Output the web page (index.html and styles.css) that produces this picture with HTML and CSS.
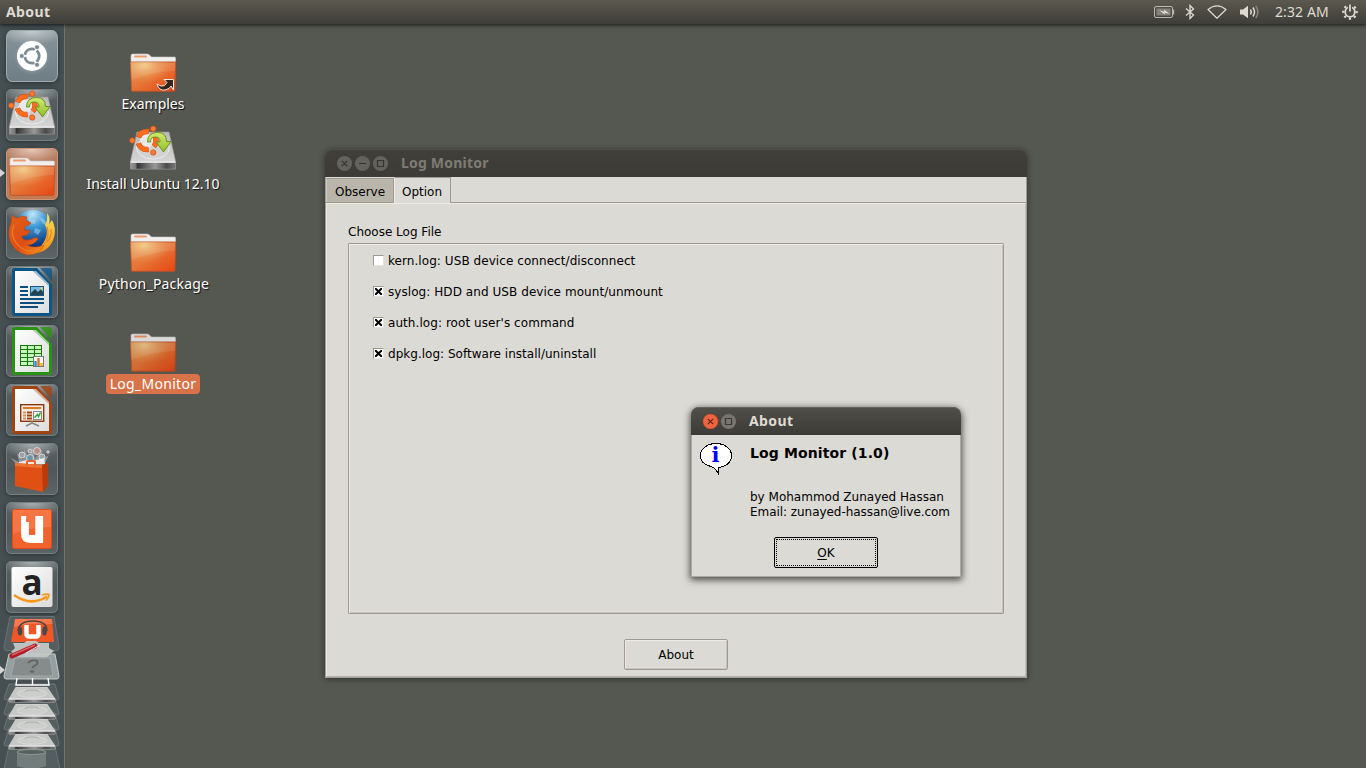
FILE: index.html
```html
<!DOCTYPE html>
<html lang="en">
<head>
<meta charset="utf-8">
<title>About</title>
<link rel="stylesheet" href="styles.css">
</head>
<body>
<svg class="defs" aria-hidden="true">
  <defs>
    <linearGradient id="orange" x1="0" y1="0" x2="1" y2="1"><stop offset="0" stop-color="#e6904e"/><stop offset=".45" stop-color="#e6783a"/><stop offset="1" stop-color="#e8450f"/></linearGradient>
    <radialGradient id="shine" cx=".3" cy=".12" r=".6"><stop offset="0" stop-color="#f3d08a" stop-opacity=".9"/><stop offset="1" stop-color="#ea9a55" stop-opacity="0"/></radialGradient>
    <linearGradient id="plate" x1="0" y1="0" x2="0" y2="1"><stop offset="0" stop-color="#b9b9b9"/><stop offset="1" stop-color="#dcdcdc"/></linearGradient>
    <linearGradient id="front"><stop offset="0" stop-color="#999"/><stop offset=".12" stop-color="#777"/><stop offset=".15" stop-color="#333"/><stop offset=".55" stop-color="#999"/><stop offset=".8" stop-color="#4c4c4c"/><stop offset="1" stop-color="#777"/></linearGradient>
    <linearGradient id="lime" x1="0" y1="0" x2="0" y2="1"><stop offset="0" stop-color="#d3ea72"/><stop offset="1" stop-color="#8fbf2c"/></linearGradient>
    <linearGradient id="paper" x1="0" y1="0" x2="1" y2="1"><stop offset="0" stop-color="#fff"/><stop offset="1" stop-color="#dcdcdc"/></linearGradient>
    <radialGradient id="globe" cx=".5" cy=".1" r=".85"><stop offset="0" stop-color="#bfe6fa"/><stop offset=".4" stop-color="#3d97d3"/><stop offset="1" stop-color="#0b2f78"/></radialGradient>
    <linearGradient id="fox" x1="0" y1="0" x2="1" y2="1"><stop offset="0" stop-color="#e2601a"/><stop offset=".55" stop-color="#dd4d12"/><stop offset="1" stop-color="#f39a1f"/></linearGradient>
    <linearGradient id="tail" x1="0" y1="0" x2="0" y2="1"><stop offset="0" stop-color="#fbe65e"/><stop offset="1" stop-color="#ee8b18"/></linearGradient>
    <symbol id="folder" viewBox="0 0 48 40">
      <path d="M2 12V2.500q0-1.500 1.500-1.500H18q2 0 3 1.500L22.500 4H45.500q1 0 1 1v10H2z" fill="#f0efee" stroke="#c9c6c3" stroke-width=".6"/>
      <rect x="5" y="2.600" width="13" height="2" rx="1" fill="#eb9c6b"/>
      <path d="M1.500 9h45.200l-.8 28.500q0 .8-1 .8H3.400q-1 0-1-.8z" fill="url(#orange)" stroke="#bb512a" stroke-width=".9"/>
      <path d="M1.500 9h45.200l-.8 28.500q0 .8-1 .8H3.400q-1 0-1-.8z" fill="url(#shine)"/>
      <path d="M2.500 9.700h43.400l-.3 8Q24 18.500 2.800 27z" fill="#fff" opacity=".1"/>
    </symbol>
    <symbol id="disk" viewBox="0 0 48 46">
      <path d="M8 7h32l6.500 29v8H1.500v-8z" fill="url(#plate)" stroke="#999" stroke-width=".7"/>
      <ellipse cx="24" cy="23" rx="16.500" ry="11" fill="#d2d2d2" stroke="#ececec"/>
      <path d="M1.500 37.500h45v5.500q0 1-1.500 1H3q-1.500 0-1.500-1z" fill="url(#front)" stroke="#888" stroke-width=".6"/>
      <path d="M1.500 37.200h45" stroke="#fff"/>
      <circle cx="18" cy="15.500" r="7" fill="#e9e9e9"/>
      <circle cx="18" cy="15.500" r="9" fill="none" stroke="#d04a10" stroke-width="5.400" stroke-dasharray="13 5.850" stroke-dashoffset="6.500"/>
      <circle cx="18" cy="15.500" r="9" fill="none" stroke="#fb6c1e" stroke-width="4.600" stroke-dasharray="12.500 6.350" stroke-dashoffset="6.250"/>
      <g fill="#fb7a34" stroke="#cf4b12" stroke-width=".7"><circle cx="3.300" cy="15.500" r="2.700"/><circle cx="24.200" cy="3.700" r="2.700"/><circle cx="24.200" cy="27.500" r="2.700"/></g>
      <path d="M18.500 17q0-9.500 10-9.500 9 0 9 9H42L34.500 27 27 17h4q.5-5-5-5-4.500 0-4.500 5z" fill="url(#lime)" stroke="#628d10" stroke-width=".9"/>
    </symbol>
    <symbol id="sheet" viewBox="0 0 40 48">
      <path d="M3 0h22l15 17v28q0 3-3 3H3q-3 0-3-3V3q0-3 3-3z" fill="currentColor"/>
      <path d="M28 0h9q3 0 3 3v10z" fill="currentColor" opacity=".8"/>
      <path d="M3 3h18L37 18v27H3z" fill="url(#paper)"/>
      <path d="M21 3 37 18V16L24 3z" fill="#fff" opacity=".6"/>
    </symbol>
    <symbol id="thindisk" viewBox="0 0 48 17">
      <path d="M8 0h31l8 12v3H1v-3z" fill="#c6c8c6" stroke="#e2e2e2" stroke-width=".6"/>
      <ellipse cx="24" cy="6.500" rx="15" ry="3.800" fill="#cccecc" stroke="#dedede" stroke-width=".7"/><path d="M17 5q0-2 7-2t7 2" fill="none" stroke="#aaa"/>
      <path d="M1 12.500h46v2.500H1z" fill="url(#front)"/><path d="M1 12h46" stroke="#f2f2f2"/>
    </symbol>
  </defs>
</svg>

<div class="desktop">
  <header class="panel">
    <span class="panel-title">About</span>
    <div class="indicators">
      <svg class="i-battery" viewBox="0 0 21 12"><rect x=".5" y=".5" width="18" height="11" rx="1.500" fill="none" stroke="#b9b6ae"/><rect x="2.500" y="2.500" width="14" height="7" fill="#83817a"/><path d="M19.500 3.500v5" stroke="#b9b6ae" stroke-width="1.400"/><path d="M5 4l5.500 2L10 3.500l5.500 4.500-5-1.500.4 2z" fill="#eceae4"/></svg>
      <svg class="i-bt" viewBox="0 0 10 16"><path d="M1 4.500l7.500 6.500L5 14.500v-13L8.500 5 1 11.500" fill="none" stroke="#dfdbd2" stroke-width="1.300"/></svg>
      <svg class="i-wifi" viewBox="0 0 20 14"><path d="M1 4.500Q10-2.800 19 4.500L10 13.200z" fill="none" stroke="#dfdbd2" stroke-width="1.200" stroke-linejoin="round"/></svg>
      <svg class="i-vol" viewBox="0 0 20 14"><path d="M0 4.500h3L8 .8v12.400L3 9.500H0z" fill="#dfdbd2"/><path d="M10.500 4.500q1.500 2.500 0 5M13 2.500q3 4.500 0 9" fill="none" stroke="#dfdbd2" stroke-width="1.500"/><path d="M15.800.8q4.200 6.200 0 12.400" fill="none" stroke="#89867e" stroke-width="1.500"/></svg>
      <span class="clock">2:32 AM</span>
      <svg class="i-gear" viewBox="0 0 16 16"><circle cx="8" cy="8" r="4.800" fill="none" stroke="#dfdbd2" stroke-width="1.800"/><circle cx="8" cy="8" r="6.700" fill="none" stroke="#dfdbd2" stroke-width="2.200" stroke-dasharray="2.200 3.062" stroke-dashoffset="1.100"/><path d="M8 0v7" stroke="#4c4b44" stroke-width="4"/><path d="M8 .5v7" stroke="#dfdbd2" stroke-width="1.800"/></svg>
    </div>
  </header>

  <nav class="launcher">
    <div class="tile home"><svg viewBox="0 0 52 52"><circle cx="26" cy="26" r="15" fill="#fff"/><circle cx="26" cy="26" r="7.200" fill="none" stroke="#7c8a91" stroke-width="2.800" stroke-dasharray="13 2.080" stroke-dashoffset="6.500"/><g fill="#7c8a91" stroke="#fff" stroke-width=".8"><circle cx="15.800" cy="26" r="2.500"/><circle cx="31" cy="17.200" r="2.500"/><circle cx="31" cy="34.800" r="2.500"/></g></svg></div>
    <div class="tile"><svg viewBox="0 0 52 52"><use href="#disk" x="2" y="1" width="48" height="46"/></svg></div>
    <div class="tile files"><svg viewBox="0 0 52 52"><use href="#folder" x="2" y="9" width="48" height="40"/></svg></div>
    <div class="tile"><svg viewBox="0 0 52 52">
      <circle cx="27" cy="22.500" r="19.500" fill="url(#globe)"/>
      <path d="M22 6l6 2-3 4 5 1-1 4-6-1zM33 10l6 3 3 5-5-1zM29 21l6 2-3 5-4-3z" fill="#bfe2ef" opacity=".45"/>
      <path d="M41 6q4 5 2 11l3-4q4 8 2.500 15Q46 42 32 46q-8 2-14-1 18-1 22-15 2-7-1-12 3-5 2-12z" fill="url(#tail)"/>
      <path d="M41 20q3 9-3 17M45 22q1 8-4 13" fill="none" stroke="#e98a1c" stroke-width="1.200"/>
      <path d="M6 8q2 3 6 3 3-3 9-1l-1 3 5 3q-2 3-5 3-2 2-1 4 2 1 5 0-1 6-8 6 0 4 5 4 4 0 7-2 4-1 4 1-4 6-11 6 7 4 17 0-4 10-17 10Q8 45 4 34 1 25 5 16z" fill="url(#fox)" stroke="#b83d0c" stroke-width=".5"/>
      <path d="M8 18Q3 30 14 40q8 6 17 3" fill="none" stroke="#f07a26" stroke-width="1.300"/>
    </svg></div>
    <div class="tile writer"><svg viewBox="0 0 52 52"><use href="#sheet" x="6" y="2" width="40" height="48"/><path d="M14 21h8M14 25h8M14 29h8M14 33h24M14 37h24M14 41h18" stroke="#0f4f80" stroke-width="1.900"/><rect x="24.500" y="20.500" width="13" height="9" fill="#77bde7" stroke="#185885"/><path d="M25 29v-2l4-4 3 3 3-3 2 3v3z" fill="#29414d"/><circle cx="35.500" cy="22.500" r="1.200" fill="#f2d257"/></svg></div>
    <div class="tile calc"><svg viewBox="0 0 52 52"><use href="#sheet" x="6" y="2" width="40" height="48"/><rect x="14.500" y="20.500" width="21" height="20" fill="#c9f7bd" stroke="#17780c"/><path d="M14 24.500h22M14 28.500h22M14 32.500h22M14 36.500h22M21.500 20v21M28.500 20v21" stroke="#17780c" stroke-width="1.100"/><rect x="27.500" y="31.500" width="10" height="10" fill="#fff" stroke="#777"/><path d="M29.500 36v5" stroke="#2a91d5" stroke-width="2.500"/><path d="M32.500 33v8" stroke="#e07127" stroke-width="2.500"/><path d="M35.500 38v3" stroke="#ecb51d" stroke-width="2.500"/></svg></div>
    <div class="tile impress"><svg viewBox="0 0 52 52"><use href="#sheet" x="6" y="2" width="40" height="48"/><rect x="14.700" y="20.700" width="23" height="16.600" fill="#f4eee9" stroke="#8c3609" stroke-width="1.400"/><path d="M17 24h18" stroke="#e2771e" stroke-width="2"/><path d="M17 28.500h3M17 31.500h3M17 34.500h3" stroke="#e48c56" stroke-width="1.800"/><path d="M21 28.500h5M21 31.500h5M21 34.500h5" stroke="#a64313" stroke-width="1.800"/><rect x="27.500" y="27.500" width="8" height="8" fill="#f5f5f5" stroke="#888"/><path d="M28.500 33.500l3-3 1 2 2-4" fill="none" stroke="#29a636" stroke-width="1.500"/><path d="M26 37v2l-6 3M26 39l7 3" fill="none" stroke="#888" stroke-width="1.600"/></svg></div>
    <div class="tile"><svg viewBox="0 0 52 52">
      <path d="M11 22L5 15l8 4-2-9 6 7 1-11 5 9 4-11 2 11 7-8-1 10 8-5-5 10z" fill="#a7adaf" opacity=".7"/>
      <g fill="#98a4aa" stroke="#d6d6d6"><circle cx="16" cy="12" r="3"/><circle cx="24" cy="8" r="2"/><circle cx="31" cy="8" r="3.500" fill="#b98f86"/><circle cx="36" cy="14" r="3"/><circle cx="24" cy="15" r="3.500" fill="#6c95ad"/><circle cx="42" cy="9" r="1.200"/></g>
      <path d="M13 19l8-2 5 1 12-3 1 6H12z" fill="#fff" opacity=".8"/>
      <path d="M9 20l27 2 6-2v22l-5 7L9 43z" fill="#e04f14"/><path d="M36 22l6-2v22l-5 7z" fill="#b93a0c"/><path d="M9 20l27 2v3L9 23z" fill="#ee7434"/>
      <path d="M21 23v-4q0-1 1-1h6q1 0 1 1v4" fill="none" stroke="#e9642b" stroke-width="2"/>
    </svg></div>
    <div class="tile"><svg viewBox="0 0 52 52"><rect x="6.500" y="7.500" width="39" height="39" rx="2" fill="#f1622f" stroke="#e74a19"/><path d="M7 8h38v17Q25 25 7 32z" fill="#ff9b70" opacity=".35"/><path d="M19 19v13q0 5 5 5h6q3.200 0 3.200-3V14" fill="none" stroke="#fff" stroke-width="7.800"/><path d="M15.100 19.500V14H23v6h-7.900zM29.300 32h7.800v8.900h-7.800z" fill="#fff"/><path d="M20.500 13.500H24V20h-4v-3z" fill="#f4713f"/></svg></div>
    <div class="tile"><svg viewBox="0 0 52 52"><rect x="5.500" y="6" width="41" height="40" rx="2" fill="url(#paper)"/><text x="26" y="33.500" text-anchor="middle" class="amazon">a</text><path d="M8 34q17 12 33 1.500" fill="none" stroke="#f79a1b" stroke-width="2.600"/><path d="M36 34q5-1.500 7-.5 0 3-3 6" fill="none" stroke="#f79a1b" stroke-width="1.700"/></svg></div>
    <svg class="folded" viewBox="0 0 65 155">
      <g fill="#8b989c" fill-opacity=".2" stroke="#8a9496" stroke-opacity=".45">
        <path d="M10 2.500h44l5 30q0 4-2 4H6q-2 0-2-4z"/>
        <path d="M9 70h46l4 14q0 2-2 2H7q-3 0-3-2z"/><path d="M9 84h46l4 15q0 2-2 2H7q-3 0-3-2z"/><path d="M9 99h46l4 15q0 2-2 2H7q-3 0-3-2z"/><path d="M9 114h46l4 16q0 2-2 2H7q-3 0-3-2z"/><path d="M9 132h46l5 23H4z"/>
      </g>
      <path d="M15 5h37l2 23H11z" fill="#ef5727"/><path d="M15 5h37l.4 5Q30 8 14 13z" fill="#ff8f67" opacity=".6"/>
      <path d="M26.500 11v9q0 2.500 3 2.500h6q3 0 3-2.500v-9" fill="none" stroke="#fff" stroke-width="4.500"/><path d="M18 17Q19 7 33 7t14 10" fill="none" stroke="#444" stroke-width="1.300"/><ellipse cx="20" cy="17" rx="2.300" ry="4.500" fill="#484848"/><ellipse cx="44.500" cy="17" rx="2.300" ry="4.500" fill="#484848"/>
      <path d="M13 29h11l3-2h9l3 2h10v5l5 3-7 6H18l-7-5 4-4z" fill="#c9cdcb" opacity=".9"/>
      <path d="M9 40h46l4 22q0 3-2 3H6q-2 0-2-3z" fill="#c2c9c8" fill-opacity=".65" stroke="#c5cbca"/>
      <path d="M15 44h35l3 18H11z" fill="#858c8b" stroke="#a4aaa8"/><path d="M28 49q4-4 9-2 2 3-3 5l-2 2" fill="none" stroke="#626968" stroke-width="2"/><ellipse cx="32" cy="57.500" rx="2.500" ry="1.300" fill="#626968"/>
      <path d="M12 42L35 32" stroke="#ad1f29" stroke-width="5" stroke-linecap="round"/><path d="M12 41L35 31" stroke="#e06060" stroke-width="1.400"/><path d="M26 39l14-8" stroke="#e8e8e8" stroke-width="1"/>
      <path d="M17 64l-1 7h33l-1-7M32.500 64v7" fill="none" stroke="#fff" stroke-width="1.400"/>
      <use href="#thindisk" x="8" y="73" width="48" height="17"/><use href="#thindisk" x="8" y="90" width="48" height="17"/><use href="#thindisk" x="8" y="105" width="48" height="17"/><use href="#thindisk" x="8" y="120" width="48" height="17"/>
      <path d="M17 138v14q15 5 29 0v-14" fill="#8d9794" fill-opacity=".55"/><ellipse cx="31.500" cy="138" rx="14.500" ry="2.500" fill="#59615f" stroke="#8d9794"/>
    </svg>
    <i class="arrow arrow-files"></i><i class="arrow arrow-app"></i>
  </nav>

  <div class="shortcut s1"><svg viewBox="0 0 48 40"><use href="#folder" width="48" height="40"/><path d="M28 31q2 7 8 6 5-1 6-4l2.500 4V26.500H35l3 3q-2 4.500-6 3.500-2-1-4-2z" fill="#32241f" stroke="#f0e7e3" stroke-width="1"/></svg><span>Examples</span></div>
  <div class="shortcut s2"><svg class="disk" viewBox="0 0 48 46"><use href="#disk" width="48" height="46"/></svg><span>Install Ubuntu 12.10</span></div>
  <div class="shortcut s3"><svg viewBox="0 0 48 40"><use href="#folder" width="48" height="40"/></svg><span>Python_Package</span></div>
  <div class="shortcut s4 selected"><svg viewBox="0 0 48 40"><use href="#folder" width="48" height="40"/></svg><span>Log_Monitor</span></div>

  <section class="window main">
    <div class="titlebar">
      <svg class="ctl" viewBox="0 0 52 16"><g fill="#64625c"><circle cx="8" cy="8" r="7.600"/><circle cx="26" cy="8" r="7.600"/><circle cx="44" cy="8" r="7.600"/></g><path d="M5.300 5.300l5.400 5.400m0-5.400l-5.400 5.400M22.500 8h7M41 5h6v6h-6z" fill="none" stroke="#353430" stroke-width="1.200"/></svg>
      <span>Log Monitor</span>
    </div>
    <div class="client">
      <div class="tabs"><div class="tab">Observe</div><div class="tab active">Option</div></div>
      <div class="page">
        <div class="group-label">Choose Log File</div>
        <div class="group">
          <label class="check"><span class="box"></span><span class="caption">kern.log: USB device connect/disconnect</span></label>
          <label class="check"><span class="box on"><svg viewBox="0 0 7 7"><path d="M0 0l7 7M7 0L0 7"/></svg></span><span class="caption">syslog: HDD and USB device mount/unmount</span></label>
          <label class="check"><span class="box on"><svg viewBox="0 0 7 7"><path d="M0 0l7 7M7 0L0 7"/></svg></span><span class="caption">auth.log: root user's command</span></label>
          <label class="check"><span class="box on"><svg viewBox="0 0 7 7"><path d="M0 0l7 7M7 0L0 7"/></svg></span><span class="caption tight">dpkg.log: Software install/uninstall</span></label>
        </div>
        <button class="btn">About</button>
      </div>
    </div>
  </section>

  <section class="window dialog">
    <div class="titlebar">
      <svg class="ctl small" viewBox="0 0 34 16"><circle cx="8" cy="8" r="7.600" fill="#ed6540" stroke="#b5401f" stroke-width=".5"/><circle cx="26" cy="8" r="7.600" fill="#77756d"/><path d="M5.300 5.300l5.400 5.400m0-5.400l-5.400 5.400" stroke="#652212" stroke-width="1.200"/><path d="M23 5h6v6h-6z" fill="none" stroke="#393832" stroke-width="1.200"/></svg>
      <span>About</span>
    </div>
    <div class="dialog-client">
      <svg class="bubble" viewBox="0 0 32 31"><path d="M16 .5C7.500.5.500 5.500.500 12.500c0 5.500 4 9.500 10.500 11 3 1 4.500 2 7 6.500v-5.500C26.500 24 31.500 19 31.500 12.500 31.500 5.500 24.500.500 16 .5z" fill="#fff" stroke="#000" shape-rendering="crispEdges"/><text x="15.500" y="19" text-anchor="middle" class="info">i</text></svg>
      <div class="message"><h1>Log Monitor (1.0)</h1><p>by Mohammod Zunayed Hassan<br><span>Email: zunayed-hassan@live.com</span></p></div>
      <button class="btn default"><span><u>O</u>K</span></button>
    </div>
  </section>
</div>
</body>
</html>
```
FILE: styles.css
```css
* { box-sizing: border-box; }
body { margin: 0; overflow: hidden; }
.defs { position: absolute; width: 0; height: 0; }
.desktop { position: relative; width: 1366px; height: 768px; overflow: hidden; background: #555751; font-family: "Noto Sans", "Open Sans", sans-serif; display: flex; flex-direction: column; }

.panel { position: relative; z-index: 3; height: 24px; flex: none; display: flex; justify-content: space-between; align-items: center; padding: 0 8px 0 6px; color: #dfdbd2; font-size: 14px; background: linear-gradient(#5b594f, #3e3d38); box-shadow: 0 1px 4px rgba(0,0,0,.75); }
.panel-title { font-weight: 700; letter-spacing: .4px; padding-bottom: 1px; }
.indicators { display: flex; align-items: center; }
.indicators svg { display: block; }
.i-battery { width: 21px; height: 12px; margin-right: 10px; }
.i-bt { width: 10px; height: 16px; margin-right: 12px; }
.i-wifi { width: 20px; height: 14px; margin-right: 13px; }
.i-vol { width: 20px; height: 14px; margin-right: 15px; }
.clock { width: 55px; white-space: nowrap; margin-right: 12px; letter-spacing: .1px; padding-bottom: 1px; }
.i-gear { width: 16px; height: 16px; }

.launcher { position: relative; width: 65px; height: 744px; flex: none; padding: 6px 0 0 6px; display: flex; flex-direction: column; gap: 7px; background: #465053; border-right: 1px solid #71736f; }
.tile { width: 52px; height: 52px; flex: none; border-radius: 5px; border: 1px solid #767e80; background: radial-gradient(ellipse 32px 14px at 50% 0, rgba(220,225,225,.6), transparent), linear-gradient(#5b6365, #505759 50%, #5c6466); box-shadow: 0 1px 5px rgba(0,0,0,.4); }
.tile svg { display: block; width: 52px; height: 52px; margin: -1px; overflow: visible; }
.tile.home { border-color: #a0aaae; border-radius: 6px / 8px; background: radial-gradient(ellipse 34px 14px at 50% 0, rgba(235,240,240,.6), transparent), radial-gradient(circle at 50% 52%, rgba(255,255,255,.5), transparent 50%), linear-gradient(#87949a, #6f7e86); }
.tile.files { border-color: #cf9475; background: radial-gradient(ellipse 30px 14px at 50% 0, rgba(255,235,225,.7), transparent), linear-gradient(#b27c61, #c37a51); }
.writer { color: #0e5587; }
.calc { color: #2a9212; }
.impress { color: #a04411; }
.amazon { font: 700 35px "Open Sans", sans-serif; fill: #222; }
.folded { width: 65px; height: 155px; flex: none; margin: -6px 0 0 -6px; }
.arrow { position: absolute; left: 0; border-left: 5px solid #d5d7d5; border-top: 4px solid transparent; border-bottom: 4px solid transparent; }
.arrow-files { top: 145px; }
.arrow-app { top: 642px; }

.shortcut { position: absolute; left: 73px; width: 160px; display: flex; flex-direction: column; align-items: center; color: #fff; font-size: 14px; line-height: 20px; text-shadow: 1px 1px 1px #111; white-space: nowrap; }
.shortcut svg { width: 48px; height: 40px; display: block; }
.shortcut svg.disk { height: 46px; margin-bottom: 2px; }
.shortcut span { margin-top: 1px; padding: 0 4px; border-radius: 4px; }
.s1 { top: 53px; }
.s2 { top: 125px; }
.s3 { top: 233px; }
.s4 { top: 333px; }
.s3 span { letter-spacing: .2px; padding: 0 3px 0 5px; }
.s4 span { letter-spacing: .3px; }
.selected svg { filter: brightness(.91); }
.selected span { background: #d87248; text-shadow: none; }

.window { position: absolute; z-index: 1; }
.titlebar { height: 28px; display: flex; align-items: center; gap: 13px; padding: 0 11px; border-radius: 8px 8px 0 0; background: linear-gradient(#403f3a, #3c3b37); color: #7e7b74; font-weight: 700; font-size: 14px; letter-spacing: .2px; box-shadow: inset 0 1px #4e4d48; }
.titlebar span { line-height: 20px; }
.ctl { width: 52px; height: 16px; transform: translate(.5px, .5px); }
.main { left: 325px; top: 149px; width: 702px; height: 529px; border-radius: 8px 8px 0 0; box-shadow: 0 1px 6px rgba(0,0,0,.45); }
.client { height: 501px; border: 1px solid #9f9d95; border-top: 0; background: #dcdad5; font: 12px "DejaVu Sans", sans-serif; color: #000; display: flex; flex-direction: column; }
.tabs { height: 26px; display: flex; align-items: flex-end; flex: none; border-bottom: 1px solid #9e9a91; }
.tab { height: 24px; width: 68px; text-align: center; line-height: 26px; background: #bab5ab; border-top: 1px solid #9e9a91; border-right: 1px solid #9e9a91; border-left: 1px solid #cfcac1; }
.tab.active { width: 57px; height: 26px; padding-right: 1px; line-height: 29px; margin-bottom: -1px; background: #dcdad5; border-left-color: #eeebe7; }
.page { flex: 1; border: 1px solid #eeebe7; border-right-color: #c0beb7; border-bottom-color: #b3b0a8; padding: 21px 21px 0; display: flex; flex-direction: column; }
.group-label { height: 18px; line-height: 15px; }
.group { height: 371px; border: 1px solid #9e9a91; border-radius: 1px; box-shadow: inset 1px 1px #eeebe7, inset -1px -1px #c8c5be; padding: 8px 0 0 24px; display: flex; flex-direction: column; gap: 15px; }
.check { display: flex; align-items: center; height: 16px; white-space: nowrap; letter-spacing: .065px; }
.caption { padding-top: 2px; }
.caption.tight { letter-spacing: .02px; }
.box { width: 11px; height: 11px; margin-right: 4px; background: #fff; border: 1px solid #9e9a91; border-right-color: #e6e4df; border-bottom-color: #e6e4df; }
.box svg { display: block; width: 7px; height: 7px; margin: 1px; }
.box path { stroke: #000; stroke-width: 2; }
.btn { width: 104px; height: 31px; padding: 0; border: 1px solid #9e9a91; border-radius: 2px; box-shadow: inset 1px 1px #eeebe7, inset -1px -1px #c8c5be; background: #dcdad5; font: 12px "DejaVu Sans", sans-serif; color: #000; }
.page .btn { margin: 25px 0 0 276px; }

.dialog { left: 691px; top: 407px; width: 270px; height: 170px; border-radius: 8px 8px 0 0; box-shadow: 0 2px 7px 1px rgba(0,0,0,.65); }
.dialog .titlebar { background: linear-gradient(#504f48, #3c3b37); color: #dfdbd2; box-shadow: inset 0 1px #66645c; letter-spacing: .4px; }
.ctl.small { width: 34px; }
.dialog-client { height: 142px; background: #dcdad5; border: 1px solid #aaa8a2; border-top: 0; display: grid; grid-template-columns: 32px 1fr; grid-template-rows: 94px auto; column-gap: 18px; padding: 8px 0 0 8px; font: 12px "DejaVu Sans", sans-serif; color: #000; }
.bubble { width: 32px; height: 31px; overflow: visible; }
.info { font: 700 21px "DejaVu Serif", serif; fill: #00f; }
.message { white-space: nowrap; }
.message h1 { margin: 0; font-size: 14px; line-height: 20px; letter-spacing: .12px; }
.message p { margin: 27px 0 0; line-height: 15px; }
.message p span { letter-spacing: -.05px; }
.dialog .btn { grid-column: 1 / 3; margin-left: 74px; border-color: #000; padding: 1px; box-shadow: none; }
.dialog .btn span { display: flex; align-items: center; justify-content: center; height: 27px; border: 1px dotted #000; }
.dialog u { text-underline-offset: 2px; }
```
